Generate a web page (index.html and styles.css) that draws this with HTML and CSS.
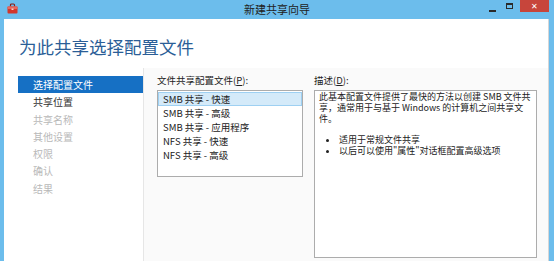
FILE: index.html
```html
<!DOCTYPE html>
<html lang="zh-CN">
<head>
  <meta charset="UTF-8" />
  <title>新建共享向导</title>
  <link rel="stylesheet" href="styles.css">
</head>
<body>

  <div class="window">
    <div class="titlebar">
      <div class="tb-left">
        <svg class="app-icon" width="11" height="11" viewBox="0 0 11 11">
          <path d="M3.5 3.5 V2 Q3.5 1 4.5 1 H6.5 Q7.5 1 7.5 2 V3.5" fill="none" stroke="#8a1f1a" stroke-width="1.2" />
          <rect x="0.5" y="3.5" width="10" height="7" rx="1" fill="#d2362c" />
          <rect x="0.5" y="3.5" width="10" height="2.5" fill="#e8675c" />
          <rect x="4.5" y="5.5" width="2" height="1.5" fill="#f6d2cc" />
        </svg>
      </div>
      <div class="tb-title">新建共享向导</div>
      <div class="tb-controls">
        <span class="btn-min"></span>
        <span class="btn-max"></span>
        <span class="btn-close">✕</span>
      </div>
    </div>

    <div class="client">
      <div class="header">
        <h1>为此共享选择配置文件</h1>
      </div>

      <div class="body">
        <ul class="nav">
          <li class="current">选择配置文件</li>
          <li>共享位置</li>
          <li class="disabled">共享名称</li>
          <li class="disabled">其他设置</li>
          <li class="disabled">权限</li>
          <li class="disabled">确认</li>
          <li class="disabled">结果</li>
        </ul>

        <div class="content">
          <div class="col col-list">
            <div class="label">文件共享配置文件(<u>P</u>):</div>
            <ul class="listbox">
              <li class="selected">SMB 共享 - 快速</li>
              <li>SMB 共享 - 高级</li>
              <li>SMB 共享 - 应用程序</li>
              <li>NFS 共享 - 快速</li>
              <li>NFS 共享 - 高级</li>
            </ul>
          </div>

          <div class="col col-desc">
            <div class="label">描述(<u>D</u>):</div>
            <div class="descbox">
              <p>此基本配置文件提供了最快的方法以创建 SMB 文件共<br>享，通常用于与基于 Windows 的计算机之间共享文<br>件。</p>
              <ul>
                <li>适用于常规文件共享</li>
                <li>以后可以使用"属性"对话框配置高级选项</li>
              </ul>
            </div>
          </div>
        </div>
      </div>
    </div>
  </div>

</body>
</html>
```

FILE: styles.css
```css
body {
  margin: 0;
  padding: 0;
  font-family: "Noto Sans CJK SC", "Noto Sans", sans-serif;
  color: #333;
  background: #fff;
  overflow: hidden;
}
.window {
  width: 554px;
  height: 261px;
  background: #6cbdec;
  display: flex;
  flex-direction: column;
  overflow: hidden;
}
.titlebar {
  height: 19px;
  flex-shrink: 0;
  display: grid;
  grid-template-columns: 1fr auto 1fr;
  align-items: start;
}
.tb-left {
  padding: 3px 0 0 7px;
}
.app-icon {
  display: block;
}
.tb-title {
  font-size: 11px;
  line-height: 19px;
  color: #222;
}
.tb-controls {
  display: flex;
  justify-content: flex-end;
  align-items: flex-start;
  padding-right: 5px;
}
.btn-min {
  width: 7px;
  height: 2px;
  background: #2a2a2a;
  margin: 10px 10px 0 0;
}
.btn-max {
  width: 7px;
  height: 6px;
  box-sizing: border-box;
  border: 1px solid #2a2a2a;
  border-top-width: 2px;
  margin: 3px 7px 0 0;
}
.btn-close {
  width: 29px;
  height: 12px;
  background: #c7453b;
  color: #fff;
  font-size: 8px;
  line-height: 12px;
  text-align: center;
}
.client {
  flex: 1;
  margin: 0 5px 0 4px;
  background: #fff;
  border-right: 1px solid #d6d6d6;
  display: flex;
  flex-direction: column;
  min-height: 0;
}
.header {
  height: 49px;
  flex-shrink: 0;
}
.header h1 {
  margin: 0;
  padding: 16px 0 0 15px;
  font-size: 17.5px;
  line-height: 24px;
  font-weight: normal;
  color: #2b5e97;
}
.body {
  flex: 1;
  display: flex;
  min-height: 0;
}
.nav {
  list-style: none;
  margin: 0;
  padding: 8px 0 0 14px;
  width: 125px;
  background: #fff;
  border-right: 1px solid #e6e6e6;
}
.nav li {
  font-size: 10px;
  line-height: 17.3px;
  padding-left: 15px;
  color: #333;
}
.nav li.current {
  background: #1670c4;
  color: #fff;
}
.nav li.disabled {
  color: #b9b9b9;
}
.content {
  flex: 1;
  display: flex;
  gap: 11px;
  padding: 6px 0 0 13px;
  background: #fafafa;
}
.col-list {
  width: 146px;
}
.col-desc {
  width: 223px;
}
.label {
  font-size: 9.5px;
  line-height: 13px;
  color: #222;
  margin-bottom: 3px;
}
.listbox {
  list-style: none;
  margin: 0;
  padding: 1px 0 0 0;
  height: 87px;
  box-sizing: border-box;
  border: 1px solid #acacac;
  background: #fff;
}
.listbox li {
  font-size: 9.5px;
  line-height: 14px;
  height: 14px;
  box-sizing: border-box;
  padding-left: 5px;
  color: #222;
}
.listbox li.selected {
  background: #d4eaf9;
  border: 1px solid #9ed0f2;
  line-height: 12px;
  padding-left: 4px;
}
.descbox {
  height: 168px;
  box-sizing: border-box;
  border: 1px solid #acacac;
  background: #fff;
  padding: 0 4px;
  font-size: 9px;
  line-height: 11px;
  color: #222;
}
.descbox p {
  margin: 0;
  white-space: nowrap;
}
.descbox ul {
  margin: 10px 0 0 0;
  padding-left: 20px;
}
```
